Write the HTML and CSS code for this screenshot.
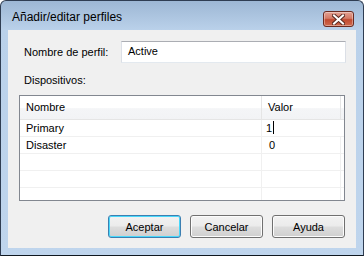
FILE: index.html
```html
<!DOCTYPE html>
<html lang="es">
<head>
    <meta charset="UTF-8">
    <meta name="viewport" content="width=device-width, initial-scale=1.0">
    <title>Añadir/editar perfiles</title>
    <link rel="stylesheet" href="styles.css">
</head>
<body>
    <div class="window">
        <div class="titlebar">
            <span class="title">Añadir/editar perfiles</span>
            <span class="close-btn">
                <svg width="13" height="11" viewBox="0 0 13 11">
                    <path d="M2 1.5 L11 9.5 M11 1.5 L2 9.5" stroke="#5a2a22" stroke-width="4" stroke-linecap="square"/>
                    <path d="M2 1.5 L11 9.5 M11 1.5 L2 9.5" stroke="#ffffff" stroke-width="2" stroke-linecap="square"/>
                </svg>
            </span>
        </div>
        <div class="client">
            <div class="field-row">
                <span class="label">Nombre de perfil:</span>
                <div class="textbox">Active</div>
            </div>
            <div class="section-label">Dispositivos:</div>
            <div class="listview">
                <div class="lv-header">
                    <div class="cell-name">Nombre</div>
                    <div class="cell-value">Valor</div>
                    <div class="cell-rest"></div>
                </div>
                <div class="lv-row">
                    <div class="cell-name">Primary</div>
                    <div class="cell-value editing">1<span class="caret"></span></div>
                </div>
                <div class="lv-row">
                    <div class="cell-name">Disaster</div>
                    <div class="cell-value">0</div>
                </div>
                <div class="lv-row">
                    <div class="cell-name"></div>
                    <div class="cell-value"></div>
                </div>
                <div class="lv-row">
                    <div class="cell-name"></div>
                    <div class="cell-value"></div>
                </div>
                <div class="lv-row">
                    <div class="cell-name"></div>
                    <div class="cell-value"></div>
                </div>
            </div>
            <div class="buttons">
                <button class="btn default">Aceptar</button>
                <button class="btn">Cancelar</button>
                <button class="btn">Ayuda</button>
            </div>
        </div>
    </div>
</body>
</html>
```

FILE: styles.css
```css
body{
  margin: 0;
  background-color: #ffffff;
  font-family: "Liberation Sans", Arial, sans-serif;
  font-size: 11px;
  color: #000;
}

.window{
  width: 364px;
  height: 256px;
  box-sizing: border-box;
  border: 1px solid #2f3d52;
  border-bottom-color: #101820;
  border-radius: 6px 6px 0 0;
  padding: 0 7px 7px 7px;
  display: flex;
  flex-direction: column;
  background: linear-gradient(#9db7d4, #bad1ea 29px, #bfd5ed);
}

.titlebar{
  height: 29px;
  box-sizing: border-box;
  padding-top: 9px;
  display: flex;
  align-items: flex-start;
}

.title{
  font-size: 12px;
  line-height: 15px;
  padding-left: 4px;
  color: #000;
}

.close-btn{
  margin-left: auto;
  margin-top: 1px;
  margin-right: 2px;
  width: 31px;
  height: 16px;
  box-sizing: border-box;
  border: 1px solid #6b2a20;
  border-radius: 3px;
  background: linear-gradient(#e3a193, #d47a66 45%, #c14a30 55%, #cf6a4e);
  box-shadow: inset 0 0 0 1px rgba(255,255,255,0.35);
  display: flex;
  align-items: center;
  justify-content: center;
}

.client{
  flex: 1;
  background-color: #f0f0f0;
  padding: 11px 11px 0 11px;
  display: flex;
  flex-direction: column;
}

.field-row{
  display: flex;
  align-items: center;
  padding-left: 5px;
}

.label{
  width: 97px;
  line-height: 13px;
}

.textbox{
  flex: 1;
  margin-right: -1px;
  height: 22px;
  box-sizing: border-box;
  background: #fff;
  border: 1px solid #dbdfe6;
  border-top-color: #abadb3;
  border-bottom-color: #e3e9ef;
  padding: 2px 6px;
  line-height: 14px;
}

.section-label{
  margin-top: 11px;
  padding-left: 5px;
  line-height: 13px;
}

.listview{
  margin-top: 8px;
  height: 106px;
  box-sizing: border-box;
  border: 1px solid #828790;
  background: #fff;
  overflow: hidden;
}

.lv-header{
  display: flex;
  height: 24px;
  box-sizing: border-box;
  border-bottom: 1px solid #e5e5e5;
  background: linear-gradient(#ffffff, #ffffff 50%, #f4f5f7 55%, #f2f3f5);
  line-height: 22px;
}

.lv-row{
  display: flex;
  height: 17px;
  box-sizing: border-box;
  border-bottom: 1px solid #f0f0f0;
  line-height: 16px;
}

.cell-name{
  width: 242px;
  box-sizing: border-box;
  border-right: 1px solid #f0f0f0;
  padding-left: 6px;
}

.lv-header .cell-name{
  border-right-color: #e5e5e5;
}

.cell-value{
  width: 79px;
  box-sizing: border-box;
  border-right: 1px solid #f0f0f0;
  padding-left: 7px;
}

.lv-header .cell-value{
  padding-left: 6px;
  border-right-color: #e5e5e5;
}

.cell-rest{
  flex: 1;
}

.cell-value.editing{
  padding-left: 4px;
  border-right-color: transparent;
}

.caret{
  display: inline-block;
  width: 1px;
  height: 13px;
  margin-left: 1px;
  background: #000;
  vertical-align: -2px;
}

.buttons{
  margin-top: 14px;
  display: flex;
  justify-content: flex-end;
  gap: 9px;
}

.btn{
  width: 73px;
  height: 23px;
  box-sizing: border-box;
  border: 1px solid #707070;
  border-radius: 3px;
  background: linear-gradient(#f2f2f2, #ebebeb 48%, #dddddd 52%, #cfcfcf);
  box-shadow: inset 0 0 0 1px #fcfcfc;
  font-family: "Liberation Sans", Arial, sans-serif;
  font-size: 11px;
  color: #000;
  padding: 0;
}

.btn.default{
  border-color: #3c7fb1;
  box-shadow: inset 0 0 0 1px #48d8fb;
}
```
